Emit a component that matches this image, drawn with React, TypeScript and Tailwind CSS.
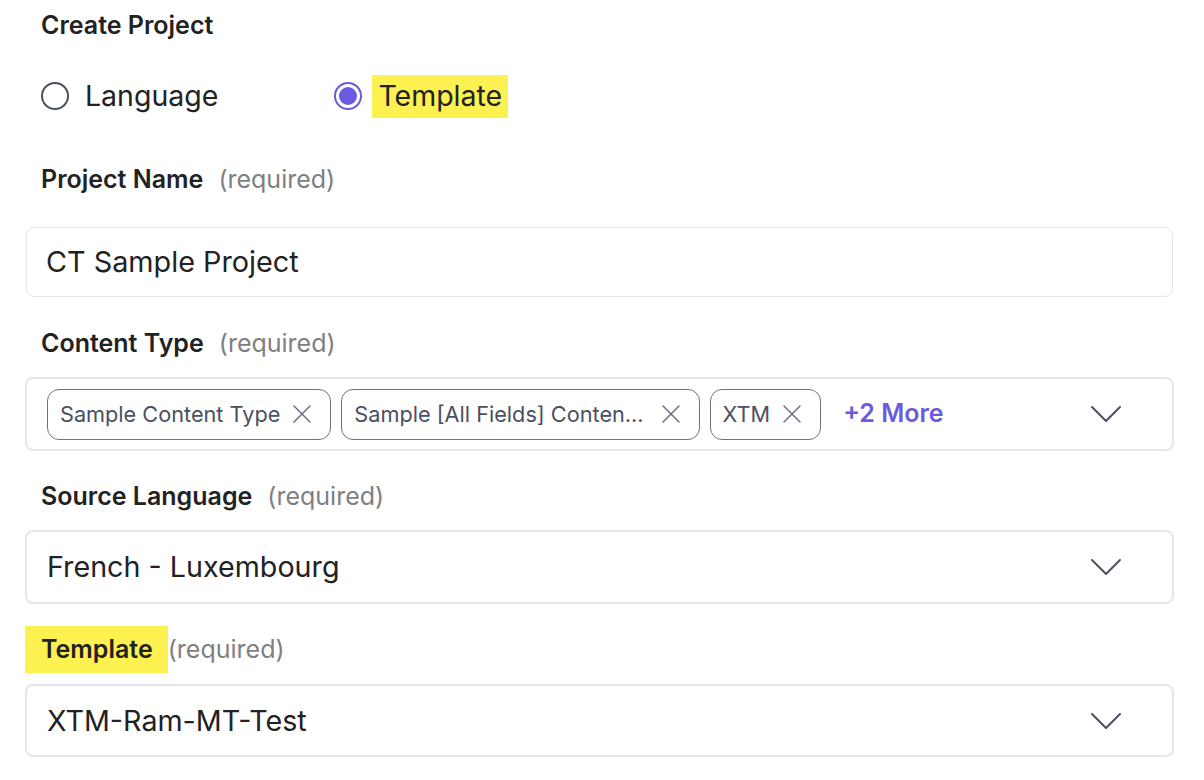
import React from "react";

const Chevron = () => (
  <svg width="32" height="18" viewBox="0 0 32 18" fill="none" className="shrink-0">
    <path d="M2 2 L16 16 L30 2" stroke="#4b5160" strokeWidth="2" strokeLinecap="round" strokeLinejoin="round" />
  </svg>
);

const XIcon = () => (
  <svg width="20" height="20" viewBox="0 0 20 20" fill="none" className="shrink-0">
    <path d="M2 2 L18 18 M18 2 L2 18" stroke="#6b7080" strokeWidth="1.5" strokeLinecap="round" />
  </svg>
);

const Chip = ({ label, wide }: { label: string; wide?: boolean }) => (
  <div
    className={
      wide
        ? "flex h-[51px] items-center gap-[17px] rounded-[12px] border border-[#6f7282] pl-[12px] pr-[18px]"
        : "flex h-[51px] items-center gap-[12px] rounded-[12px] border border-[#6f7282] pl-[12px] pr-[18px]"
    }
  >
    <span className="text-[21.7px] text-[#4a5061] whitespace-nowrap">{label}</span>
    <XIcon />
  </div>
);

const Label = ({ text, highlight }: { text: string; highlight?: boolean }) => (
  <div className="flex items-center h-[47px]">
    <span
      className={
        highlight
          ? "flex h-[47px] items-center bg-[#fdf152] pl-[16px] pr-[15px] text-[25px] font-semibold text-[#222]"
          : "pl-[16px] pr-[15px] text-[25px] font-semibold text-[#222]"
      }
    >
      {text}
    </span>
    <span className="text-[25px] text-[#7f7f7f]">(required)</span>
  </div>
);

export default function App() {
  return (
    <div
      className="w-[1204px] h-[780px] bg-white overflow-hidden"
      style={{ fontFamily: "Inter, 'Noto Sans', sans-serif" }}
    >
      <div className="ml-[25px] w-[1149px] flex flex-col">
        <div className="mt-[10px] h-[32px] flex items-center pl-[16px] text-[25px] font-semibold text-[#222]">
          Create Project
        </div>

        <div className="mt-[32px] h-[44px] flex items-center pl-[16px]">
          <div className="flex items-center">
            <span className="w-[28px] h-[28px] rounded-full border-2 border-[#4b5160] box-border" />
            <span className="ml-[16px] text-[28.5px] text-[#222]">Language</span>
          </div>
          <div className="flex items-center ml-[116px]">
            <span className="w-[28px] h-[28px] rounded-full border-2 border-[#6a5ae0] flex items-center justify-center box-border">
              <span className="w-[18px] h-[18px] rounded-full bg-[#6a5ae0]" />
            </span>
            <span className="ml-[10px] h-[43px] flex items-center bg-[#fdf152] px-[6px] text-[28.5px] text-[#222]">
              Template
            </span>
          </div>
        </div>

        <div className="mt-[38px]">
          <Label text="Project Name" />
        </div>
        <div className="mt-[24px] ml-[1px] w-[1147px] h-[70px] rounded-[8px] border border-[#e3e6ee] flex items-center pl-[19px] text-[28.8px] text-[#222]">
          CT Sample Project
        </div>

        <div className="mt-[23px]">
          <Label text="Content Type" />
        </div>
        <div className="mt-[10px] h-[74px] rounded-[8px] border-2 border-[#e3e6ee] flex items-center pl-[20px] pr-[50px]">
          <div className="flex items-center gap-[10px]">
            <Chip label="Sample Content Type" />
            <Chip label="Sample [All Fields] Conten..." wide />
            <Chip label="XTM" />
          </div>
          <span className="ml-[22px] text-[25px] font-semibold text-[#6a5ae0]">+2 More</span>
          <div className="ml-auto">
            <Chevron />
          </div>
        </div>

        <div className="mt-[22px]">
          <Label text="Source Language" />
        </div>
        <div className="mt-[10px] h-[74px] rounded-[8px] border-2 border-[#e3e6ee] flex items-center pl-[20px] pr-[50px] text-[28.7px] text-[#222]">
          <span>French - Luxembourg</span>
          <div className="ml-auto">
            <Chevron />
          </div>
        </div>

        <div className="mt-[22px]">
          <Label text="Template" highlight />
        </div>
        <div className="mt-[11px] h-[73px] rounded-[8px] border-2 border-[#e3e6ee] flex items-center pl-[20px] pr-[50px] text-[28.7px] text-[#222]">
          <span>XTM-Ram-MT-Test</span>
          <div className="ml-auto">
            <Chevron />
          </div>
        </div>
      </div>
    </div>
  );
}
